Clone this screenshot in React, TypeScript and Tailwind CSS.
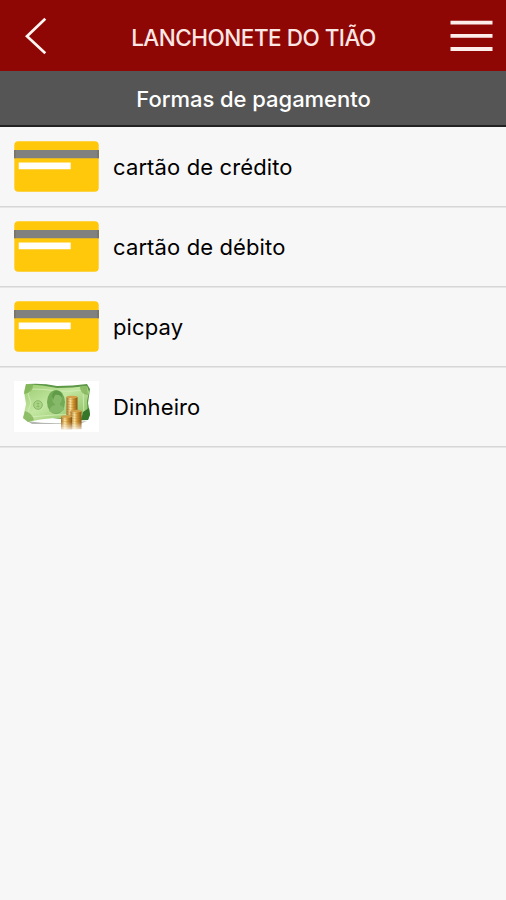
import React from "react";

function BackIcon() {
  return (
    <svg width="24" height="40" viewBox="0 0 24 40" fill="none">
      <path d="M22.3 2.8 4 20.2 22.3 37.2" stroke="#fff6f4" strokeWidth="2.7" />
    </svg>
  );
}

function MenuIcon() {
  return (
    <svg width="44" height="36" viewBox="0 0 44 36" fill="none">
      <path d="M0.5 4.6H42.5M0.5 17.8H42.5M0.5 31H42.5" stroke="#fdeeec" strokeWidth="3.8" />
    </svg>
  );
}

function CardIcon() {
  return (
    <svg width="85" height="51" viewBox="0 0 85 51">
      <rect x="0.3" y="0.3" width="84.4" height="50.4" rx="4" fill="#ffc80b" />
      <path d="M0.3 9H84.7V17.2H0.3z" fill="#808080" />
      <path d="M0.3 9H1.3V17.2H0.3zM83.7 9H84.7V17.2H83.7z" fill="#6b6558" />
      <path d="M4.7 21.4H56.7V28.3H4.7z" fill="#fffefa" />
    </svg>
  );
}

function Coins({ x, y, rows }: { x: number; y: number; rows: number }) {
  return (
    <g>
      <rect x={x} y={y} width="11" height={rows * 2.6} fill="url(#gold)" />
      {Array.from({ length: rows }, (_, i) => (
        <path
          key={i}
          d={`M${x} ${y + i * 2.6 + 1.8}q5.5 1.8 11 0`}
          stroke="#93601a"
          strokeWidth="0.5"
          fill="none"
          opacity="0.45"
        />
      ))}
      <ellipse cx={x + 5.5} cy={y} rx="5.5" ry="1.3" fill="#d3a04a" />
    </g>
  );
}

function CashIcon() {
  return (
    <svg width="85" height="51" viewBox="0 0 85 51">
      <defs>
        <linearGradient id="gold">
          <stop offset="0" stopColor="#a86d20" />
          <stop offset="0.35" stopColor="#fbe6a0" />
          <stop offset="0.6" stopColor="#d79a35" />
          <stop offset="1" stopColor="#8a5513" />
        </linearGradient>
        <linearGradient id="note" x1="0" y1="0" x2="1" y2="1">
          <stop offset="0" stopColor="#9acb70" />
          <stop offset="0.45" stopColor="#c3e7a1" />
          <stop offset="1" stopColor="#82b957" />
        </linearGradient>
        <linearGradient id="fade" x1="0" y1="0" x2="0" y2="1">
          <stop offset="0" stopColor="#fff" stopOpacity="0" />
          <stop offset="1" stopColor="#fff" />
        </linearGradient>
      </defs>
      <rect width="85" height="51" fill="#fff" />
      <path d="M13 40Q42 44.5 73 40L66 43H18z" fill="#b5b8b2" />
      <path
        d="M14 3Q29 2 43 5Q59 5 73 3L76 8 74 22 76 33 74 39Q60 40 47 38L12 34z"
        fill="#5c9745"
      />
      <path
        d="M12 3Q29 4 43 7Q59 7 73 5L75 11 73 20 74 37 70 39Q52 37 40 37Q26 38 14 41L9 37 12 23 10 11z"
        fill="url(#note)"
      />
      <path
        d="M17 8Q31 8 43 10Q57 11 69 9L70 34Q56 33 40 34L15 36 14 31 17 22 14 13z"
        fill="none"
        stroke="#d5efb9"
        strokeWidth="0.8"
      />
      <path
        d="M12 3 19 4Q19 12 10 13zM9 37 14 41 20 39Q18 32 11 30zM73 5 66 6Q66 13 74 14z"
        fill="#79ac50"
        opacity="0.7"
      />
      <path d="M67 39 69 31 75 27 76 34 74 39z" fill="#35762b" />
      <circle cx="24" cy="24" r="4.3" fill="#a9d682" stroke="#8ab56c" />
      <path d="M22.5 22.5h3M22.5 25.5h3M24 21.5v5" stroke="#8ab56c" strokeWidth="0.8" />
      <ellipse cx="42" cy="21" rx="9" ry="12" fill="#72aa56" />
      <ellipse cx="43" cy="17.5" rx="5" ry="6.4" fill="#86b969" />
      <path d="M35 30Q37 24 41 24V21H46V24Q50 25 50 29Q43 35 35 30z" fill="#86b969" />
      <path
        d="M38 15Q39 9 44 10Q49 11 48 17Q46 13 41 14L39 19z"
        fill="#5f9b49"
      />
      <Coins x={52.5} y={16} rows={7} />
      <Coins x={56.5} y={30} rows={7} />
      <Coins x={47} y={35.5} rows={5} />
      <path d="M45 41H69V51H45z" fill="url(#fade)" />
    </svg>
  );
}

const methods = [
  { label: "cartão de crédito", Icon: CardIcon },
  { label: "cartão de débito", Icon: CardIcon },
  { label: "picpay", Icon: CardIcon },
  { label: "Dinheiro", Icon: CashIcon },
];

export default function App() {
  return (
    <div className="flex h-[900px] w-full flex-col bg-[#f7f7f7] font-['Inter',sans-serif]">
      <header className="flex h-[71px] items-center bg-[#8f0704] pr-3 pl-[23px]">
        <button aria-label="Voltar" className="w-11">
          <BackIcon />
        </button>
        <h1 className="flex-1 pt-1 pr-2.5 text-center text-[22.5px] leading-8 font-medium tracking-[-0.5px] whitespace-nowrap text-[#fbe6e4]">
          LANCHONETE DO TIÃO
        </h1>
        <button aria-label="Menu">
          <MenuIcon />
        </button>
      </header>
      <h2 className="flex h-14 items-center justify-center border-b-2 border-[#222] bg-[#555] pt-[3px] pl-px text-[22px] font-medium tracking-[-0.04px] text-white">
        Formas de pagamento
      </h2>
      <ul>
        {methods.map(({ label, Icon }) => (
          <li
            key={label}
            className="flex h-20 items-center gap-3.5 border-b border-[#d6d6d6] pl-3.5 text-[22px] tracking-[0.12px] text-black shadow-[0_1px_0_#e6e6e6]"
          >
            <Icon />
            <span className="pt-0.5">{label}</span>
          </li>
        ))}
      </ul>
    </div>
  );
}
